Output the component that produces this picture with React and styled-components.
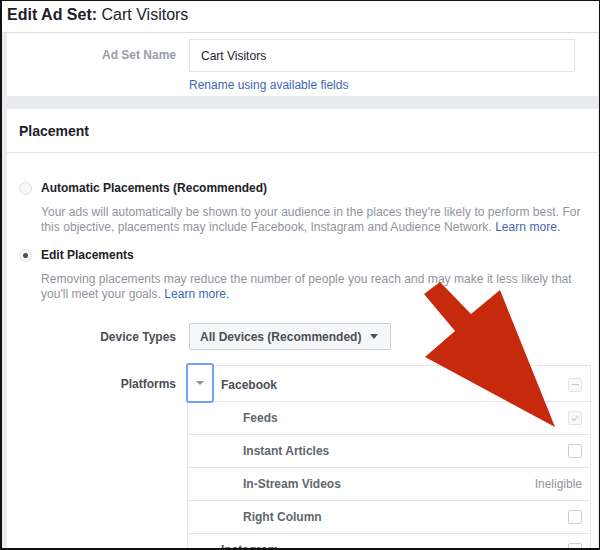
import React from 'react';
import styled, { createGlobalStyle } from 'styled-components';

const GlobalStyle = createGlobalStyle`
  html, body {
    margin: 0;
    padding: 0;
    background: #ffffff;
  }
  body {
    font-family: 'Liberation Sans', Arial, Helvetica, sans-serif;
    color: #1d2129;
  }
  * {
    box-sizing: border-box;
  }
`;

const platforms = [
  { name: 'Feeds', state: 'checked' },
  { name: 'Instant Articles', state: 'empty' },
  { name: 'In-Stream Videos', state: 'ineligible' },
  { name: 'Right Column', state: 'empty' },
];

const Checkbox = ({ state }) => {
  if (state === 'ineligible') return <Ineligible>Ineligible</Ineligible>;
  return (
    <Box disabled={state === 'mixed' || state === 'checked'}>
      {state === 'mixed' && <Dash />}
      {state === 'checked' && (
        <svg width="8" height="7" viewBox="0 0 8 7">
          <path d="M1 3.6 L3 5.5 L7 1.2" fill="none" stroke="#c4c7cc" strokeWidth="1.2" />
        </svg>
      )}
    </Box>
  );
};

const App = () => {
  return (
    <Frame>
      <GlobalStyle />
      <Header>
        <strong>Edit Ad Set:</strong> Cart Visitors
      </Header>
      <Body>
        <NameCard>
          <FieldRow>
            <NameLabel>Ad Set Name</NameLabel>
            <div>
              <TextInput>Cart Visitors</TextInput>
              <Link>Rename using available fields</Link>
            </div>
          </FieldRow>
        </NameCard>

        <PlacementCard>
          <CardTitle>Placement</CardTitle>
          <Options>
            <Option>
              <Radio />
              <OptionTitle>Automatic Placements (Recommended)</OptionTitle>
              <span />
              <OptionText>
                Your ads will automatically be shown to your audience in the places they're likely to perform best. For
                this objective, placements may include Facebook, Instagram and Audience Network.{' '}
                <InlineLink>Learn more.</InlineLink>
              </OptionText>
            </Option>
            <Option>
              <Radio selected />
              <OptionTitle>Edit Placements</OptionTitle>
              <span />
              <OptionText>
                Removing placements may reduce the number of people you reach and may make it less likely that
                you'll meet your goals. <InlineLink>Learn more.</InlineLink>
              </OptionText>
            </Option>
          </Options>

          <DeviceRow>
            <FieldLabel>Device Types</FieldLabel>
            <SelectButton>
              All Devices (Recommended)
              <Caret />
            </SelectButton>
          </DeviceRow>

          <PlatformRow>
            <FieldLabel>Platforms</FieldLabel>
            <PlatformTable>
              <GroupRow>
                <Toggle>
                  <SmallCaret />
                </Toggle>
                <GroupName>Facebook</GroupName>
                <Checkbox state="mixed" />
              </GroupRow>
              {platforms.map((p) => (
                <SubRow key={p.name}>
                  <SubName>{p.name}</SubName>
                  <Checkbox state={p.state} />
                </SubRow>
              ))}
              <GroupRow last>
                <span />
                <GroupName>Instagram</GroupName>
                <Checkbox state="empty" />
              </GroupRow>
            </PlatformTable>
          </PlatformRow>
        </PlacementCard>
      </Body>

      <Arrow viewBox="0 0 600 550" width="600" height="550">
        <polygon
          points="440,282 471,314 500,290 555,427 425,357 455,331 424,294"
          fill="#c6290c"
        />
      </Arrow>
    </Frame>
  );
};

const Frame = styled.div`
  position: relative;
  width: 600px;
  height: 550px;
  overflow: hidden;
  background: #e9ebee;
  border-style: solid;
  border-color: #111;
  border-width: 1px 1px 2px 2px;
  display: flex;
  flex-direction: column;
`;

const Header = styled.div`
  height: 32px;
  flex-shrink: 0;
  background: #fff;
  border-bottom: 1px solid #dddfe2;
  padding: 5px 0 0 5px;
  font-size: 16px;
  color: #1d2129;

  strong {
    font-weight: bold;
  }
`;

const Body = styled.div`
  flex: 1;
  display: flex;
  flex-direction: column;
  gap: 13px;
  padding: 0 1px 0 5px;
`;

const Card = styled.div`
  background: #fff;
`;

const NameCard = styled(Card)`
  height: 63px;
  padding-top: 6px;
`;

const PlacementCard = styled(Card)`
  flex: 1;
`;

const FieldRow = styled.div`
  display: grid;
  grid-template-columns: 169px 1fr;
  column-gap: 13px;
  align-items: start;
`;

const FieldLabel = styled.div`
  text-align: right;
  font-size: 12px;
  font-weight: bold;
  color: #4b4f56;
  line-height: 16px;
`;

const NameLabel = styled(FieldLabel)`
  color: #9a9ea6;
  margin-top: 8px;
`;

const TextInput = styled.div`
  width: 386px;
  height: 33px;
  border: 1px solid #e2e4e8;
  padding: 0 11px;
  display: flex;
  align-items: center;
  font-size: 12px;
  color: #1d2129;
`;

const Link = styled.div`
  color: #4267b2;
  font-size: 12px;
  margin-top: 6px;
`;

const InlineLink = styled.span`
  color: #4267b2;
`;

const CardTitle = styled.div`
  height: 44px;
  border-bottom: 1px solid #e5e5e5;
  padding: 0 12px;
  display: flex;
  align-items: center;
  font-size: 14px;
  font-weight: bold;
  color: #1d2129;
`;

const Options = styled.div`
  padding: 27px 12px 0 12px;
  display: flex;
  flex-direction: column;
  gap: 12px;
`;

const Option = styled.div`
  display: grid;
  grid-template-columns: 22px 1fr;
  row-gap: 9px;
  align-items: center;
`;

const Radio = styled.span`
  width: 13px;
  height: 13px;
  border-radius: 50%;
  border: 1px solid #dcdee2;
  background: #f7f8fa;
  display: flex;
  align-items: center;
  justify-content: center;

  &::after {
    content: '';
    width: 5px;
    height: 5px;
    border-radius: 50%;
    background: ${(p) => (p.selected ? '#4b4f56' : 'transparent')};
  }
`;

const OptionTitle = styled.div`
  font-size: 12px;
  font-weight: bold;
  color: #1d2129;
  line-height: 16px;
`;

const OptionText = styled.div`
  font-size: 12px;
  line-height: 15px;
  letter-spacing: 0.04px;
  color: #90949c;
`;

const DeviceRow = styled(FieldRow)`
  align-items: center;
  margin-top: 21px;
`;

const SelectButton = styled.div`
  width: 202px;
  height: 27px;
  border: 1px solid #ced0d4;
  border-radius: 2px;
  background: #f6f7f9;
  display: flex;
  align-items: center;
  gap: 9px;
  padding-left: 10px;
  font-size: 12px;
  font-weight: bold;
  color: #4b4f56;
`;

const Caret = styled.span`
  width: 0;
  height: 0;
  border-left: 4px solid transparent;
  border-right: 4px solid transparent;
  border-top: 5px solid #4b4f56;
`;

const PlatformRow = styled.div`
  display: grid;
  grid-template-columns: 169px 1fr;
  column-gap: 11px;
  margin-top: 13px;

  & > ${FieldLabel} {
    margin-top: 13px;
  }
`;

const PlatformTable = styled.div`
  width: 404px;
  border-left: 1px solid #e5e5e5;
  border-right: 1px solid #e5e5e5;
  margin-top: 2px;
`;

const GroupRow = styled.div`
  display: grid;
  grid-template-columns: 33px 1fr auto;
  align-items: center;
  height: ${(p) => (p.last ? '33px' : '36px')};
  border-top: 1px solid #e5e5e5;
  padding-right: 8px;
`;

const Toggle = styled.div`
  align-self: start;
  width: 28px;
  height: 40px;
  margin: -3px 0 0 -2px;
  border: 2px solid #6ea4f6;
  border-radius: 3px;
  background: #fff;
  display: flex;
  align-items: center;
  justify-content: center;
`;

const SmallCaret = styled(Caret)`
  border-top: 4px solid #90949c;
`;

const GroupName = styled.div`
  font-size: 12px;
  font-weight: bold;
  color: #4b4f56;
`;

const SubRow = styled.div`
  display: flex;
  align-items: center;
  justify-content: space-between;
  height: 33px;
  border-top: 1px solid #e5e5e5;
  padding: 0 8px 0 55px;
`;

const SubName = styled.div`
  font-size: 12px;
  font-weight: bold;
  color: #606770;
`;

const Box = styled.span`
  width: 14px;
  height: 14px;
  border: 1px solid ${(p) => (p.disabled ? '#e3e5e8' : '#ccd0d5')};
  border-radius: 2px;
  background: ${(p) => (p.disabled ? '#f7f8fa' : '#fff')};
  display: flex;
  align-items: center;
  justify-content: center;
`;

const Dash = styled.span`
  width: 7px;
  height: 1px;
  background: #c4c7cc;
`;

const Ineligible = styled.span`
  font-size: 12px;
  color: #90949c;
`;

const Arrow = styled.svg`
  position: absolute;
  top: -1px;
  left: -2px;
  pointer-events: none;
`;

export default App;
